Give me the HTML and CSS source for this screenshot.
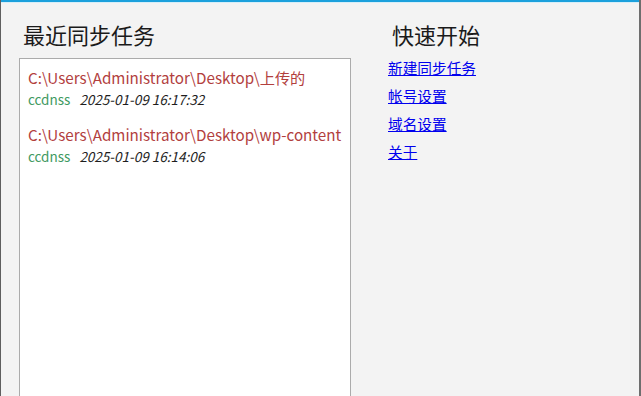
FILE: index.html
```html
<!DOCTYPE html>
<html lang="zh-CN">
<head>
<meta charset="utf-8">
<link rel="stylesheet" href="styles.css">
</head>
<body>
<div class="window">
  <div class="topbar"></div>
  <div class="content">
    <section class="recent">
      <h1 class="title">最近同步任务</h1>
      <div class="listbox">
        <div class="task">
          <div class="path">C:\Users\Administrator\Desktop\上传的</div>
          <div class="meta"><span class="user">ccdnss</span><span class="time">2025-01-09 16:17:32</span></div>
        </div>
        <div class="task">
          <div class="path">C:\Users\Administrator\Desktop\wp-content</div>
          <div class="meta"><span class="user">ccdnss</span><span class="time">2025-01-09 16:14:06</span></div>
        </div>
      </div>
    </section>
    <section class="quick">
      <h1 class="title quick-title">快速开始</h1>
      <nav class="links">
        <a href="#">新建同步任务</a>
        <a href="#">帐号设置</a>
        <a href="#">域名设置</a>
        <a href="#">关于</a>
      </nav>
    </section>
  </div>
</div>
</body>
</html>
```
FILE: styles.css
```css
html, body {
  margin: 0;
  padding: 0;
  height: 100%;
  overflow: hidden;
}
body {
  font-family: "Noto Sans CJK SC", "Noto Sans", sans-serif;
  background: #f3f3f3;
}
.window {
  height: 396px;
  box-sizing: border-box;
  border-left: 1px solid #5f5f5f;
  border-right: 2px solid #6e6e6e;
  display: flex;
  flex-direction: column;
}
.topbar {
  height: 2px;
  background: #1ba0dc;
  border-bottom: 1px solid #d6eef8;
  flex: none;
}
.content {
  flex: 1;
  display: flex;
  min-height: 0;
}
.recent {
  display: flex;
  flex-direction: column;
  padding-left: 18px;
  width: 332px;
}
.title {
  margin: 0;
  font-weight: normal;
  font-size: 22px;
  line-height: 32px;
  height: 32px;
  padding-top: 15px;
  padding-left: 4px;
  color: #1a1a1a;
}
.listbox {
  margin-top: 8px;
  flex: 1;
  background: #ffffff;
  border: 1px solid #ababab;
  border-bottom: none;
  padding: 7px 0 0 8px;
}
.task {
  margin-bottom: 13px;
}
.path {
  color: #b2403e;
  font-size: 15.2px;
  line-height: 22px;
  white-space: nowrap;
}
.meta {
  font-size: 13.5px;
  line-height: 22px;
  display: flex;
  gap: 9px;
}
.user {
  color: #3f9a62;
}
.time {
  color: #1e1e1e;
  font-style: italic;
}
.quick {
  padding-left: 37px;
}
.quick-title {
  padding-left: 4px;
}
.links {
  display: flex;
  flex-direction: column;
  align-items: flex-start;
  margin-top: 8px;
  gap: 8px;
}
.links a {
  color: #0000ee;
  font-size: 14.67px;
  line-height: 20px;
  text-decoration: underline;
}
```
